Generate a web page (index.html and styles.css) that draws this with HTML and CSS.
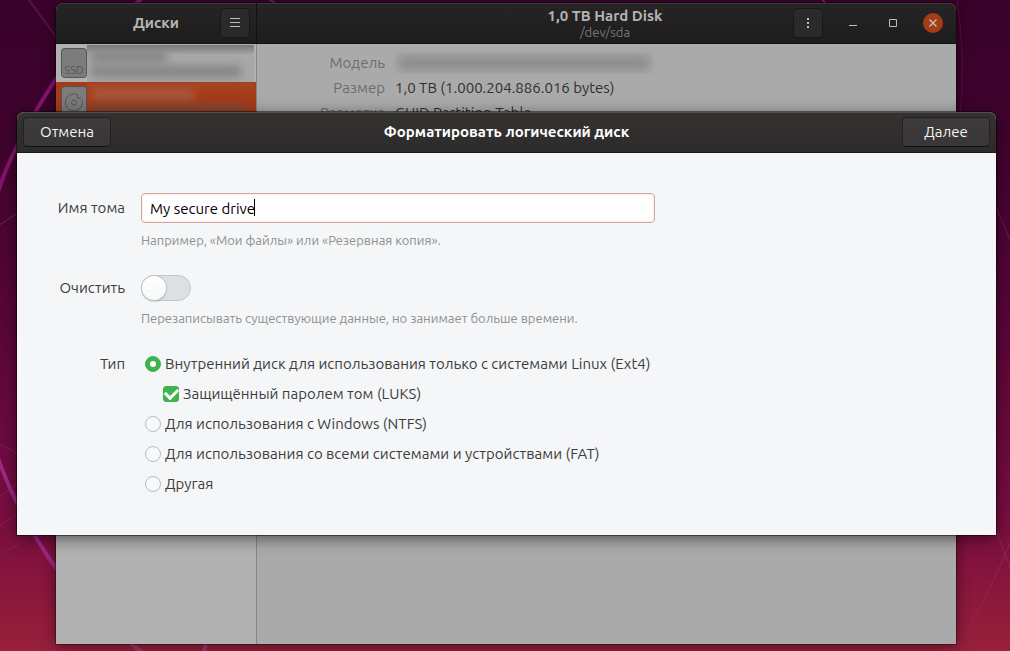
FILE: index.html
```html
<!DOCTYPE html>
<html lang="ru">
<head>
<meta charset="utf-8">
<title>Диски</title>
<link rel="stylesheet" href="styles.css">
</head>
<body>
<svg class="wallpaper" viewBox="0 0 1010 651" preserveAspectRatio="none" aria-hidden="true">
  <g fill="none">
    <path d="M142 -2 56 79Q14 142 -2 192" stroke="#86146f" stroke-width="4"/>
    <path d="M29 0 60 42" stroke="#5c0f42" stroke-width="2"/>
    <path d="M-2 458Q18 515 58 571" stroke="#9c2a86" stroke-width="4"/>
    <path d="M-2 226 20 211M-2 443 20 455M-2 498 20 482M-2 527 20 512M-2 557 40 530" stroke="#7b2258" stroke-width="1"/>
    <path d="M130 643 146 655M206 643 203 655" stroke="#a03a66" stroke-width="4"/>
    <path d="M957 0Q966 60 960 115" stroke="#5c0c45" stroke-width="1"/>
    <path d="M994 202 1011 242" stroke="#6a1f4d" stroke-width="1"/>
    <path d="M1010 543Q985 605 953 652M996 530 1010 568" stroke="#8a2850" stroke-width="1"/>
    <path d="M269 -1 276 4M822 -1 826 4" stroke="#86146f" stroke-width="2"/>
  </g>
</svg>

<section class="window" aria-label="Диски">
  <header class="titlebar">
    <div class="titlebar-side">
      <h1 class="app-title">Диски</h1>
      <button class="icon-button" type="button" aria-label="Меню">
        <svg width="16" height="16" viewBox="0 0 16 16"><path d="M3 3.500h10M3 7.500h10M3 11.500h10" stroke="#bdbdbd"/></svg>
      </button>
    </div>
    <div class="titlebar-main">
      <div class="disk-title">
        <h2 class="disk-name">1,0 TB Hard Disk</h2>
        <p class="disk-path">/dev/sda</p>
      </div>
      <div class="window-controls">
        <button class="icon-button" type="button" aria-label="Параметры диска">
          <svg width="16" height="16" viewBox="0 0 16 16" fill="#bdbdbd"><path d="M7 3h2v2H7zM7 7h2v2H7zM7 11h2v2H7z"/></svg>
        </button>
        <button class="control" type="button" aria-label="Свернуть">
          <svg width="20" height="20" viewBox="0 0 20 20"><path d="M6 12.500h8" stroke="#bdbdbd"/></svg>
        </button>
        <button class="control" type="button" aria-label="Развернуть">
          <svg width="20" height="20" viewBox="0 0 20 20"><path d="M6.500 6.500h7v7h-7z" stroke="#bdbdbd" fill="none"/></svg>
        </button>
        <button class="control close" type="button" aria-label="Закрыть">
          <svg width="20" height="20" viewBox="0 0 20 20"><path d="m6.500 6.500 7 7m0-7-7 7" stroke="#c9b8b0" stroke-width="1.500"/></svg>
        </button>
      </div>
    </div>
  </header>
  <div class="window-body">
    <nav class="sidebar" aria-label="Устройства">
      <div class="drive">
        <svg class="drive-icon" width="26" height="30" viewBox="0 0 26 30">
          <rect x=".5" y=".5" width="25" height="29" rx="3" fill="#7c7c7c" stroke="#555"/>
          <text class="ssd-text" x="13" y="26" text-anchor="middle">SSD</text>
        </svg>
        <span class="redacted"><i class="smudge"></i><i class="smudge long"></i></span>
      </div>
      <div class="drive selected">
        <svg class="drive-icon" width="26" height="30" viewBox="0 0 26 30">
          <rect x=".5" y=".5" width="25" height="29" rx="3" fill="#7c7c7c" stroke="#555"/>
          <g fill="none" stroke="#555"><path d="M16.500 8.600A8.500 8.500 0 1 0 21 13.500M16.500 8.600v3.500h4"/><circle cx="13" cy="16.500" r="2.500"/></g>
        </svg>
        <span class="redacted"><i class="smudge"></i><i class="smudge long"></i></span>
      </div>
    </nav>
    <dl class="details">
      <dt>Модель</dt><dd><span class="model-blur"><i class="model-smudge"></i></span></dd>
      <dt>Размер</dt><dd>1,0 TB (1.000.204.886.016 bytes)</dd>
      <dt>Разметка</dt><dd>GUID Partition Table</dd>
    </dl>
  </div>
</section>

<form class="dialog" role="dialog" aria-labelledby="dialog-title">
  <header class="dialog-bar">
    <button class="text-button" type="button">Отмена</button>
    <h2 class="dialog-title" id="dialog-title">Форматировать логический диск</h2>
    <button class="text-button" type="button">Далее</button>
  </header>
  <div class="fields">
    <label class="field-label name-label" for="volume">Имя тома</label>
    <input class="volume" id="volume" type="text" value="My secure drive">
    <p class="hint">Например, «Мои файлы» или «Резервная копия».</p>

    <label class="field-label erase-label" for="erase">Очистить</label>
    <input class="switch" id="erase" type="checkbox" role="switch">
    <p class="hint">Перезаписывать существующие данные, но занимает больше времени.</p>

    <span class="field-label type-label" id="type-label">Тип</span>
    <div class="types" role="radiogroup" aria-labelledby="type-label">
      <label class="option"><input class="radio" type="radio" name="type" checked>Внутренний диск для использования только с системами Linux (Ext4)</label>
      <label class="option nested"><input class="check" type="checkbox" checked>Защищённый паролем том (LUKS)</label>
      <label class="option"><input class="radio" type="radio" name="type">Для использования с Windows (NTFS)</label>
      <label class="option"><input class="radio" type="radio" name="type">Для использования со всеми системами и устройствами (FAT)</label>
      <label class="option"><input class="radio" type="radio" name="type">Другая</label>
    </div>
  </div>
</form>
</body>
</html>
```
FILE: styles.css
```css
* {
  box-sizing: border-box;
}

body {
  position: relative;
  min-height: 100vh;
  margin: 0;
  overflow: hidden;
  background: linear-gradient(#38022a 0%, #42042f 25%, #5a0638 50%, #740c42 75%, #82123e 86%, #98203a 100%);
  font-family: Ubuntu, "Noto Sans", sans-serif;
  font-size: 15px;
  line-height: 20px;
}

h1, h2, p, dl, dd {
  margin: 0;
}

button, input {
  margin: 0;
  font: inherit;
}

.wallpaper {
  position: absolute;
  inset: 0;
  width: 100%;
  height: 100%;
}

.window {
  position: absolute;
  inset: 3px 54px 7px 56px;
  display: flex;
  flex-direction: column;
  overflow: hidden;
  border-radius: 7px 7px 0 0;
  background: #aaa;
  box-shadow: 0 0 0 1px rgba(0, 0, 0, .3), 0 2px 14px rgba(0, 0, 0, .5);
}

.titlebar {
  display: flex;
  height: 41px;
  border-bottom: 1px solid #111;
  background: linear-gradient(#262424, #1e1d1d);
  box-shadow: inset 0 1px #393737;
  color: #b5b3b0;
}

.titlebar-side {
  display: flex;
  align-items: center;
  flex: 0 0 201px;
  padding-right: 6px;
  border-right: 1px solid #111;
}

.app-title {
  flex: 1;
  padding-left: 36px;
  font-size: 15px;
  text-align: center;
}

.titlebar-main {
  display: flex;
  align-items: center;
  flex: 1;
}

.disk-title {
  flex: 1;
  padding-left: 160px;
  text-align: center;
}

.disk-name {
  font-size: 15px;
  line-height: 18px;
}

.disk-path {
  color: #777573;
  font-size: 13px;
  line-height: 14px;
}

.window-controls {
  display: flex;
  align-items: center;
  gap: 20px;
  padding-right: 13px;
}

.icon-button {
  display: grid;
  place-items: center;
  width: 30px;
  height: 30px;
  padding: 0;
  border: 1px solid #181717;
  border-radius: 4px;
  background: #2b2a2a;
}

.control {
  width: 20px;
  height: 20px;
  padding: 0;
  border: 0;
  border-radius: 50%;
  background: none;
}

.control svg {
  display: block;
}

.close {
  background: #a63b17;
}

.window-body {
  display: flex;
  flex: 1;
}

.sidebar {
  flex: 0 0 201px;
  border-right: 1px solid #80868b;
  background: #b1b1b1;
}

.drive {
  display: flex;
  height: 38px;
  padding: 4px 2px 0 5px;
}

.selected {
  background: #a63b17;
}

.drive-icon {
  flex: none;
}

.ssd-text {
  fill: #555;
  font-size: 11px;
}

.redacted {
  display: flex;
  flex: 1;
  flex-direction: column;
  gap: 4px;
  height: 37px;
  margin-top: -3px;
  padding: 6px 4px;
  overflow: hidden;
  background: linear-gradient(#777, #a8a8a8 10px);
}

.selected .redacted {
  background: linear-gradient(#a04a2a, #a63b17 10px);
}

.smudge {
  flex: none;
  width: 76px;
  height: 11px;
  background: #848484;
  filter: blur(4px);
}

.long {
  width: 150px;
}

.selected .smudge {
  width: 104px;
  background: #aa5a40;
}

.selected .long {
  width: 155px;
  background: #834733;
}

.details {
  display: grid;
  grid-template-columns: 128px 1fr;
  align-content: start;
  flex: 1;
  gap: 5px 10px;
  padding-top: 9px;
  color: #303030;
}

.details dt {
  color: #6d6d6d;
  text-align: right;
}

.model-blur {
  display: block;
  width: 258px;
  height: 20px;
  padding: 4px 5px;
  background: #a5a5a5;
}

.model-smudge {
  display: block;
  height: 12px;
  background: #8b8b8b;
  filter: blur(4px);
}

.dialog {
  position: absolute;
  top: 112px;
  right: 14px;
  left: 17px;
  border-radius: 7px 7px 0 0;
  background: #f4f6f8;
  box-shadow: 0 0 0 1px rgba(0, 0, 0, .45), 0 3px 16px rgba(0, 0, 0, .55);
  color: #3d3d3d;
}

.dialog-bar {
  display: flex;
  align-items: center;
  justify-content: space-between;
  height: 41px;
  padding: 0 6px;
  border-bottom: 1px solid #1c1b1b;
  border-radius: 7px 7px 0 0;
  background: linear-gradient(#353331, #2c2a2b);
  box-shadow: inset 0 1px #504e4b;
}

.dialog-title {
  color: #fff;
  font-size: 15px;
}

.text-button {
  width: 88px;
  height: 30px;
  padding: 0;
  border: 1px solid #232122;
  border-bottom-color: #111;
  border-radius: 4px;
  background: linear-gradient(#3d3b3a, #383637);
  color: #f2f2f2;
}

.fields {
  display: grid;
  grid-template-columns: 68px minmax(0, 514px);
  align-items: start;
  column-gap: 16px;
  padding: 40px 40px 41px;
}

.field-label {
  text-align: right;
  white-space: nowrap;
}

.name-label {
  padding-top: 5px;
}

.volume {
  display: block;
  width: 100%;
  height: 30px;
  padding: 0 8px;
  border: 1px solid #d3aaa1;
  border-radius: 4px;
  outline: 0;
  background: linear-gradient(#000, #000) 112px 5px / 1px 17px no-repeat #fff;
  box-shadow: inset 0 0 0 1px #fbeae5;
  color: #000;
}

.volume:focus {
  background: #fff;
}

.hint {
  grid-column: 2;
  padding-top: 8px;
  color: #8e9091;
  font-size: 13px;
  line-height: 18px;
}

.erase-label {
  margin-top: 29px;
}

.switch {
  display: flex;
  width: 50px;
  height: 26px;
  margin-top: 26px;
  appearance: none;
  border: 1px solid #c3c8ce;
  border-radius: 13px;
  background: #dcdfe4;
}

.switch::before {
  width: 24px;
  height: 24px;
  border-radius: 50%;
  background: linear-gradient(#fff, #f7f8f9);
  box-shadow: 0 0 0 1px #bcc1c8, 0 2px 2px rgba(0, 0, 0, .15);
  content: "";
}

.switch:checked {
  justify-content: flex-end;
  background: #3eb34f;
}

.type-label {
  margin-top: 27px;
}

.types {
  display: flex;
  flex-direction: column;
  gap: 10px;
  margin-top: 27px;
  padding-left: 4px;
}

.option {
  display: flex;
  align-items: center;
  gap: 4px;
}

.nested {
  padding-left: 18px;
}

.radio, .check {
  display: grid;
  place-items: center;
  flex: none;
  width: 16px;
  height: 16px;
  appearance: none;
  border: 1px solid #b7bcc2;
  border-radius: 50%;
  background: #f7f8fa;
}

.check {
  border-radius: 3px;
}

.radio:checked, .check:checked {
  border-color: #3eb34f;
  background: #3eb34f;
}

.radio:checked::before {
  width: 6px;
  height: 6px;
  border-radius: 50%;
  background: #fff;
  content: "";
}

.check:checked::before {
  width: 10px;
  height: 6px;
  margin-bottom: 3px;
  border: solid #fff;
  border-width: 0 0 3px 3px;
  transform: rotate(-45deg);
  content: "";
}
```
